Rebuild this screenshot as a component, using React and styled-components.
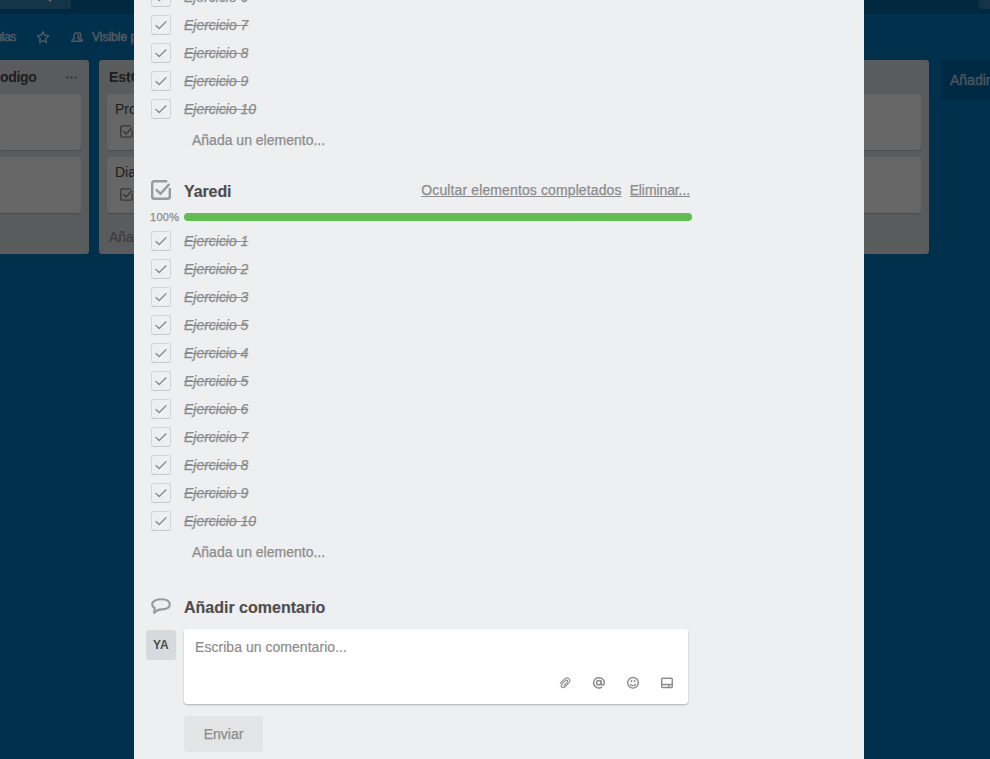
import React from "react";
import styled, { createGlobalStyle } from "styled-components";

const GlobalStyle = createGlobalStyle`
  * { box-sizing: border-box; }
  html, body { margin: 0; height: 100%; overflow: hidden; background: #0079bf; }
  body {
    font-family: "Liberation Sans", Arial, sans-serif;
    font-size: 14px;
    line-height: 20px;
    color: #4d4d4d;
  }
`;

const Page = styled.div`
  position: relative;
  width: 990px;
  height: 759px;
  overflow: hidden;
  background: #0079bf;
`;

/* Board behind the dialog */
const TopBar = styled.div`
  display: flex;
  justify-content: space-between;
  height: 14px;
  background: #00659f;
`;
const TopButton = styled.div`
  display: flex;
  justify-content: flex-end;
  width: ${(p) => p.$width}px;
  height: 9px;
  padding-right: ${(p) => (p.$side === "left" ? 19 : 0)}px;
  overflow: hidden;
  background: rgba(255, 255, 255, 0.2);
  border-radius: ${(p) => (p.$side === "left" ? "0 0 3px 0" : "0 0 0 3px")};
  svg { display: block; }
`;
const BoardBar = styled.div`
  display: flex;
  align-items: center;
  height: 46px;
  color: #fff;
  opacity: 0.78;
  font-size: 12px;
  -webkit-text-stroke: 0.45px #fff;
  white-space: nowrap;
  svg { display: block; flex: none; }
`;
const BoardName = styled.span`
  width: 16px;
  margin-right: 20px;
  display: flex;
  justify-content: flex-end;
  letter-spacing: -0.3px;
`;
const Visibility = styled.span`
  display: flex;
  align-items: center;
  gap: 8px;
  margin-left: 20px;
`;
const Lists = styled.div`
  display: flex;
  align-items: flex-start;
  gap: 10px;
`;
const List = styled.section`
  flex: none;
  width: ${(p) => p.$width || 270}px;
  height: 194px;
  padding: 0 8px;
  padding-left: ${(p) => (p.$cut ? 0 : 8)}px;
  background: #e2e4e6;
  border-radius: ${(p) => (p.$cut ? "0 3px 3px 0" : "3px")};
`;
const ListHeader = styled.header`
  display: flex;
  justify-content: space-between;
  align-items: center;
  height: 34px;
  padding: 0 4px 0 ${(p) => (p.$cut ? 0 : 2)}px;
  font-weight: bold;
  letter-spacing: ${(p) => (p.$cut ? -0.35 : 0)}px;
  svg { display: block; }
`;
const Card = styled.article`
  display: flex;
  flex-direction: column;
  gap: 6px;
  height: 56px;
  margin-bottom: 7px;
  padding: 5px 8px;
  background: #fff;
  border-radius: ${(p) => (p.$cut ? "0 3px 3px 0" : "3px")};
  box-shadow: 0 1px 1px #b8babc;
  svg { display: block; margin-left: 5px; }
`;
const ListFooter = styled.div`
  padding: 7px 2px;
  color: #8c8c8c;
`;
const NewList = styled.div`
  flex: none;
  width: 270px;
  height: 40px;
  margin-left: 2px;
  padding: 10px 9px;
  border-radius: 3px;
  background: rgba(0, 0, 0, 0.12);
  color: rgba(255, 255, 255, 0.7);
  -webkit-text-stroke: 0.3px rgba(255, 255, 255, 0.7);
`;

/* Dialog */
const Overlay = styled.div`
  position: absolute;
  inset: 0;
  padding: 0 126px 0 134px;
  background: rgba(0, 0, 0, 0.6);
`;
const Dialog = styled.main`
  height: 759px;
  padding-left: 12px;
  overflow: hidden;
  background: #edeff0;
`;
const Checklist = styled.section`
  margin-top: ${(p) => p.$top || 0}px;
`;
const Item = styled.div`
  display: flex;
  align-items: center;
  gap: 13px;
  height: 28px;
  padding-left: 5px;
  color: #8c8c8c;
`;
const CheckBox = styled.span`
  display: flex;
  width: 20px;
  height: 20px;
  border: 1px solid #d2d5d8;
  border-bottom-color: #c6c9cc;
  border-radius: 3px;
`;
const ItemText = styled.span`
  font-style: italic;
  text-decoration: line-through;
  letter-spacing: -0.02px;
  -webkit-text-stroke: 0.25px #8c8c8c;
`;
const AddItem = styled.div`
  margin-top: 7px;
  padding-left: 46px;
  color: #8c8c8c;
  -webkit-text-stroke: 0.25px #8c8c8c;
`;
const SectionHeader = styled.header`
  display: flex;
  align-items: center;
  height: 20px;
  width: 544px;
  margin-top: ${(p) => p.$top}px;
  padding-left: 5px;
  svg { flex: none; display: block; }
`;
const Heading = styled.h3`
  flex: 1;
  margin: 0 0 0 13px;
  padding-top: ${(p) => p.$drop || 2}px;
  font-size: 16px;
  line-height: 20px;
  letter-spacing: ${(p) => p.$track || 0}px;
  -webkit-text-stroke: 0.15px #4d4d4d;
`;
const HeaderLink = styled.a`
  margin-left: 8px;
  color: #8c8c8c;
  text-decoration: underline;
  letter-spacing: ${(p) => p.$track || 0}px;
  -webkit-text-stroke: 0.25px #8c8c8c;
`;
const Progress = styled.div`
  display: flex;
  align-items: center;
  height: 14px;
  margin: 10px 0 3px;
  padding-left: 4px;
`;
const Percent = styled.span`
  width: 34px;
  color: #8c8c8c;
  font-size: 11px;
  letter-spacing: 0.3px;
  -webkit-text-stroke: 0.25px #8c8c8c;
`;
const Track = styled.div`
  width: 508px;
  height: 8px;
  border-radius: 4px;
  background: #61bd4f;
`;
const CommentRow = styled.div`
  display: flex;
  align-items: flex-start;
  gap: 8px;
  margin-top: 12px;
`;
const Avatar = styled.div`
  width: 30px;
  height: 30px;
  margin-top: 1px;
  border-radius: 3px;
  background: #d6dadc;
  font-size: 12px;
  font-weight: bold;
  line-height: 30px;
  text-align: center;
  letter-spacing: 0.2px;
`;
const CommentBox = styled.div`
  display: flex;
  flex-direction: column;
  justify-content: space-between;
  width: 504px;
  height: 75px;
  padding: 8px 14px 14px 11px;
  border-radius: 3px;
  background: #fff;
  box-shadow: 0 1px 2px rgba(0, 0, 0, 0.28);
  color: #8c8c8c;
  letter-spacing: 0.04px;
  -webkit-text-stroke: 0.2px #8c8c8c;
`;
const Tools = styled.div`
  display: flex;
  justify-content: flex-end;
  gap: 20px;
  svg { display: block; }
`;
const SendButton = styled.button`
  display: block;
  width: 79px;
  height: 36px;
  margin: 12px 0 0 38px;
  padding: 0;
  border: 0;
  border-radius: 3px;
  background: #e2e4e6;
  color: #8c8c8c;
  font: 14px "Liberation Sans", Arial, sans-serif;
  -webkit-text-stroke: 0.25px #8c8c8c;
`;

const CheckedSquare = ({ size, color = "#999", weight = 2.4 }) => (
  <svg width={size} height={size} viewBox="0 0 20 20" fill="none" stroke={color} strokeWidth={weight}>
    <path d="M16.2 1.3H3.2A2 2 0 0 0 1.2 3.3v13.4a2 2 0 0 0 2 2h13.600a2 2 0 0 0 2-2V8" />
    <path d="M5 9.300l4.500 4.500L18.400 4" />
  </svg>
);
const Tick = () => (
  <svg width="18" height="18" viewBox="0 0 18 18" fill="none" stroke="#8f8f8f" strokeWidth="1.5">
    <path d="M3.600 9.200l3.600 3.300 7.100-7" />
  </svg>
);
const Dots = () => (
  <svg width="11" height="3" viewBox="0 0 11 3" fill="#8c8c8c">
    <circle cx="1.5" cy="1.5" r="1.2" />
    <circle cx="5.5" cy="1.5" r="1.2" />
    <circle cx="9.5" cy="1.5" r="1.2" />
  </svg>
);
const Star = () => (
  <svg width="14" height="14" viewBox="0 0 14 14" fill="none" stroke="#fff" strokeWidth="1.4" strokeLinejoin="round">
    <path d="M7 1.6l1.7 3.6 3.9.5-2.8 2.8.7 4L7 10.6l-3.5 1.9.7-4L1.4 5.7l3.9-.5z" />
  </svg>
);
const People = () => (
  <svg width="14" height="14" viewBox="0 0 14 14" fill="none" stroke="#fff" strokeWidth="1.4" strokeLinejoin="round">
    <path d="M1.800 11.200c0-1.900 1.300-2.300 2.800-3C3.500 6.400 3.800 2.700 6.300 2.700s2.800 3.700 1.600 5.500c1.400.6 2.500 1.100 2.500 3z" />
    <path d="M8.500 2.400c2.700 0 2.900 3.700 1.600 5.300 1.500.6 2.300 1.400 2.300 3.500h-1.400" />
  </svg>
);
const Bubble = () => (
  <svg width="20" height="20" viewBox="0 0 20 20" fill="none" stroke="#999" strokeWidth="2.1" strokeLinejoin="round">
    <path d="M10.600 2.200c-5.600 0-9.400 2-9.400 5 0 1.700.9 3 2.500 3.800l-.6 4.900c2-2.400 4.300-3.300 7.400-3.500 5.200-.2 8.300-2.200 8.300-5.200s-3-5-8.200-5z" />
  </svg>
);
const Clip = () => (
  <svg width="14" height="14" viewBox="0 0 14 14" fill="none" stroke="#8c8c8c" strokeWidth="1.100" strokeLinecap="round">
    <path d="M2.300 7.100l3.600-3.500c1.900-1.900 4.100-1.800 5.200-.8 1.200 1.200.9 2.700-.4 4.100l-3.500 3.600c-1.200 1.200-2.700 1.200-3.500.5-.9-.9-.8-2 .3-3.200l3.300-3.100c.7-.7 1.500-.7 2-.2s.4 1.100-.2 1.800L6 9.300" />
  </svg>
);
const At = () => (
  <svg width="14" height="14" viewBox="0 0 14 14" fill="none" stroke="#8c8c8c" strokeWidth="1.500">
    <circle cx="6.800" cy="6.800" r="2.200" />
    <path d="M9.100 4.300v3.600c0 1.700 3.300 1.600 3.300-1.200A5.400 5.200 0 1 0 10 11.200" />
  </svg>
);
const Smile = () => (
  <svg width="14" height="14" viewBox="0 0 14 14" fill="none" stroke="#8c8c8c" strokeWidth="1.400">
    <circle cx="7" cy="6.800" r="5.300" />
    <path d="M5.500 4v2.200M8.500 4v2.200M4.300 7.800c.6 2.400 4.800 2.400 5.400 0" />
  </svg>
);
const CardIcon = () => (
  <svg width="14" height="14" viewBox="0 0 14 14" fill="none" stroke="#8c8c8c" strokeWidth="1.500">
    <rect x="1.700" y="2.200" width="10.600" height="9.200" rx="1" />
    <path d="M2 8.600h10M8.800 8.600v3" />
  </svg>
);

const CheckItem = ({ n }) => (
  <Item>
    <CheckBox><Tick /></CheckBox>
    <ItemText>Ejercicio {n}</ItemText>
  </Item>
);

const BoardList = ({ title, cards, footer, width, cut }) => (
  <List $width={width} $cut={cut}>
    <ListHeader $cut={cut}>{title}<span><Dots /></span></ListHeader>
    {cards.map((text, i) => (
      <Card key={i} $cut={cut}>
        {text}
        {text && <CheckedSquare size={13} color="#8c8c8c" weight={2.2} />}
      </Card>
    ))}
    <ListFooter>{footer}</ListFooter>
  </List>
);

export default function App() {
  return (
    <Page>
      <GlobalStyle />
      <TopBar>
        <TopButton $width={71} $side="left">
          <svg width="4" height="4" viewBox="0 0 4 4"><circle cx="2" cy="0" r="1.500" fill="#fff" /></svg>
        </TopButton>
        <TopButton $width={11} $side="right" />
      </TopBar>
      <BoardBar>
        <BoardName>ulas</BoardName>
        <Star />
        <Visibility><People />Visible para</Visibility>
      </BoardBar>
      <Lists>
        <BoardList title="odigo" cards={["", ""]} width={89} cut />
        <BoardList title="EstC" cards={["Pro", "Dia"]} footer="Aña" />
        <BoardList title="" cards={["", ""]} />
        <BoardList title="" cards={["", ""]} />
        <NewList>Añadir</NewList>
      </Lists>
      <Overlay>
        <Dialog>
          <Checklist $top={-17}>
            {[6, 7, 8, 9, 10].map((n) => <CheckItem key={n} n={n} />)}
            <AddItem>Añada un elemento...</AddItem>
          </Checklist>
          <Checklist>
            <SectionHeader $top={30}>
              <CheckedSquare size={20} />
              <Heading $drop={3} $track={-0.1}>Yaredi</Heading>
              <HeaderLink $track={0.12}>Ocultar elementos completados</HeaderLink>
              <HeaderLink $track={-0.1}>Eliminar...</HeaderLink>
            </SectionHeader>
            <Progress><Percent>100%</Percent><Track /></Progress>
            {[1, 2, 3, 5, 4, 5, 6, 7, 8, 9, 10].map((n, i) => <CheckItem key={i} n={n} />)}
            <AddItem>Añada un elemento...</AddItem>
          </Checklist>
          <SectionHeader $top={35}>
            <Bubble />
            <Heading>Añadir comentario</Heading>
          </SectionHeader>
          <CommentRow>
            <Avatar>YA</Avatar>
            <CommentBox>
              Escriba un comentario...
              <Tools><Clip /><At /><Smile /><CardIcon /></Tools>
            </CommentBox>
          </CommentRow>
          <SendButton>Enviar</SendButton>
        </Dialog>
      </Overlay>
    </Page>
  );
}
